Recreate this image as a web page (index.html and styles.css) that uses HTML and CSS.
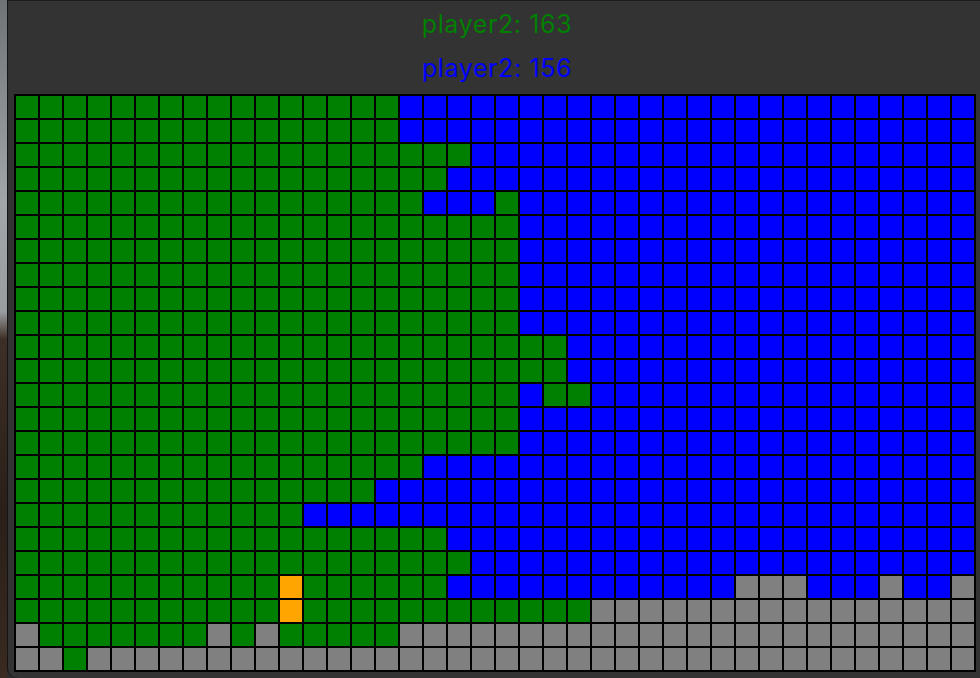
FILE: index.html
```html
<!DOCTYPE html>
<html lang="en">
<head>
<meta charset="utf-8">
<title>Territory</title>
<link rel="stylesheet" href="styles.css">
</head>
<body>
<div class="screen">
  <div class="desktop"></div>
  <div class="window">
    <header class="scores">
      <p class="score p1">player2: 163</p>
      <p class="score p2">player2: 156</p>
    </header>
    <div class="board">
<!-- row 0 -->
<i class=g></i><i class=g></i><i class=g></i><i class=g></i><i class=g></i><i class=g></i><i class=g></i><i class=g></i><i class=g></i><i class=g></i>
<i class=g></i><i class=g></i><i class=g></i><i class=g></i><i class=g></i><i class=g></i><i class=b></i><i class=b></i><i class=b></i><i class=b></i>
<i class=b></i><i class=b></i><i class=b></i><i class=b></i><i class=b></i><i class=b></i><i class=b></i><i class=b></i><i class=b></i><i class=b></i>
<i class=b></i><i class=b></i><i class=b></i><i class=b></i><i class=b></i><i class=b></i><i class=b></i><i class=b></i><i class=b></i><i class=b></i>
<!-- row 1 -->
<i class=g></i><i class=g></i><i class=g></i><i class=g></i><i class=g></i><i class=g></i><i class=g></i><i class=g></i><i class=g></i><i class=g></i>
<i class=g></i><i class=g></i><i class=g></i><i class=g></i><i class=g></i><i class=g></i><i class=b></i><i class=b></i><i class=b></i><i class=b></i>
<i class=b></i><i class=b></i><i class=b></i><i class=b></i><i class=b></i><i class=b></i><i class=b></i><i class=b></i><i class=b></i><i class=b></i>
<i class=b></i><i class=b></i><i class=b></i><i class=b></i><i class=b></i><i class=b></i><i class=b></i><i class=b></i><i class=b></i><i class=b></i>
<!-- row 2 -->
<i class=g></i><i class=g></i><i class=g></i><i class=g></i><i class=g></i><i class=g></i><i class=g></i><i class=g></i><i class=g></i><i class=g></i>
<i class=g></i><i class=g></i><i class=g></i><i class=g></i><i class=g></i><i class=g></i><i class=g></i><i class=g></i><i class=g></i><i class=b></i>
<i class=b></i><i class=b></i><i class=b></i><i class=b></i><i class=b></i><i class=b></i><i class=b></i><i class=b></i><i class=b></i><i class=b></i>
<i class=b></i><i class=b></i><i class=b></i><i class=b></i><i class=b></i><i class=b></i><i class=b></i><i class=b></i><i class=b></i><i class=b></i>
<!-- row 3 -->
<i class=g></i><i class=g></i><i class=g></i><i class=g></i><i class=g></i><i class=g></i><i class=g></i><i class=g></i><i class=g></i><i class=g></i>
<i class=g></i><i class=g></i><i class=g></i><i class=g></i><i class=g></i><i class=g></i><i class=g></i><i class=g></i><i class=b></i><i class=b></i>
<i class=b></i><i class=b></i><i class=b></i><i class=b></i><i class=b></i><i class=b></i><i class=b></i><i class=b></i><i class=b></i><i class=b></i>
<i class=b></i><i class=b></i><i class=b></i><i class=b></i><i class=b></i><i class=b></i><i class=b></i><i class=b></i><i class=b></i><i class=b></i>
<!-- row 4 -->
<i class=g></i><i class=g></i><i class=g></i><i class=g></i><i class=g></i><i class=g></i><i class=g></i><i class=g></i><i class=g></i><i class=g></i>
<i class=g></i><i class=g></i><i class=g></i><i class=g></i><i class=g></i><i class=g></i><i class=g></i><i class=b></i><i class=b></i><i class=b></i>
<i class=g></i><i class=b></i><i class=b></i><i class=b></i><i class=b></i><i class=b></i><i class=b></i><i class=b></i><i class=b></i><i class=b></i>
<i class=b></i><i class=b></i><i class=b></i><i class=b></i><i class=b></i><i class=b></i><i class=b></i><i class=b></i><i class=b></i><i class=b></i>
<!-- row 5 -->
<i class=g></i><i class=g></i><i class=g></i><i class=g></i><i class=g></i><i class=g></i><i class=g></i><i class=g></i><i class=g></i><i class=g></i>
<i class=g></i><i class=g></i><i class=g></i><i class=g></i><i class=g></i><i class=g></i><i class=g></i><i class=g></i><i class=g></i><i class=g></i>
<i class=g></i><i class=b></i><i class=b></i><i class=b></i><i class=b></i><i class=b></i><i class=b></i><i class=b></i><i class=b></i><i class=b></i>
<i class=b></i><i class=b></i><i class=b></i><i class=b></i><i class=b></i><i class=b></i><i class=b></i><i class=b></i><i class=b></i><i class=b></i>
<!-- row 6 -->
<i class=g></i><i class=g></i><i class=g></i><i class=g></i><i class=g></i><i class=g></i><i class=g></i><i class=g></i><i class=g></i><i class=g></i>
<i class=g></i><i class=g></i><i class=g></i><i class=g></i><i class=g></i><i class=g></i><i class=g></i><i class=g></i><i class=g></i><i class=g></i>
<i class=g></i><i class=b></i><i class=b></i><i class=b></i><i class=b></i><i class=b></i><i class=b></i><i class=b></i><i class=b></i><i class=b></i>
<i class=b></i><i class=b></i><i class=b></i><i class=b></i><i class=b></i><i class=b></i><i class=b></i><i class=b></i><i class=b></i><i class=b></i>
<!-- row 7 -->
<i class=g></i><i class=g></i><i class=g></i><i class=g></i><i class=g></i><i class=g></i><i class=g></i><i class=g></i><i class=g></i><i class=g></i>
<i class=g></i><i class=g></i><i class=g></i><i class=g></i><i class=g></i><i class=g></i><i class=g></i><i class=g></i><i class=g></i><i class=g></i>
<i class=g></i><i class=b></i><i class=b></i><i class=b></i><i class=b></i><i class=b></i><i class=b></i><i class=b></i><i class=b></i><i class=b></i>
<i class=b></i><i class=b></i><i class=b></i><i class=b></i><i class=b></i><i class=b></i><i class=b></i><i class=b></i><i class=b></i><i class=b></i>
<!-- row 8 -->
<i class=g></i><i class=g></i><i class=g></i><i class=g></i><i class=g></i><i class=g></i><i class=g></i><i class=g></i><i class=g></i><i class=g></i>
<i class=g></i><i class=g></i><i class=g></i><i class=g></i><i class=g></i><i class=g></i><i class=g></i><i class=g></i><i class=g></i><i class=g></i>
<i class=g></i><i class=b></i><i class=b></i><i class=b></i><i class=b></i><i class=b></i><i class=b></i><i class=b></i><i class=b></i><i class=b></i>
<i class=b></i><i class=b></i><i class=b></i><i class=b></i><i class=b></i><i class=b></i><i class=b></i><i class=b></i><i class=b></i><i class=b></i>
<!-- row 9 -->
<i class=g></i><i class=g></i><i class=g></i><i class=g></i><i class=g></i><i class=g></i><i class=g></i><i class=g></i><i class=g></i><i class=g></i>
<i class=g></i><i class=g></i><i class=g></i><i class=g></i><i class=g></i><i class=g></i><i class=g></i><i class=g></i><i class=g></i><i class=g></i>
<i class=g></i><i class=b></i><i class=b></i><i class=b></i><i class=b></i><i class=b></i><i class=b></i><i class=b></i><i class=b></i><i class=b></i>
<i class=b></i><i class=b></i><i class=b></i><i class=b></i><i class=b></i><i class=b></i><i class=b></i><i class=b></i><i class=b></i><i class=b></i>
<!-- row 10 -->
<i class=g></i><i class=g></i><i class=g></i><i class=g></i><i class=g></i><i class=g></i><i class=g></i><i class=g></i><i class=g></i><i class=g></i>
<i class=g></i><i class=g></i><i class=g></i><i class=g></i><i class=g></i><i class=g></i><i class=g></i><i class=g></i><i class=g></i><i class=g></i>
<i class=g></i><i class=g></i><i class=g></i><i class=b></i><i class=b></i><i class=b></i><i class=b></i><i class=b></i><i class=b></i><i class=b></i>
<i class=b></i><i class=b></i><i class=b></i><i class=b></i><i class=b></i><i class=b></i><i class=b></i><i class=b></i><i class=b></i><i class=b></i>
<!-- row 11 -->
<i class=g></i><i class=g></i><i class=g></i><i class=g></i><i class=g></i><i class=g></i><i class=g></i><i class=g></i><i class=g></i><i class=g></i>
<i class=g></i><i class=g></i><i class=g></i><i class=g></i><i class=g></i><i class=g></i><i class=g></i><i class=g></i><i class=g></i><i class=g></i>
<i class=g></i><i class=g></i><i class=g></i><i class=b></i><i class=b></i><i class=b></i><i class=b></i><i class=b></i><i class=b></i><i class=b></i>
<i class=b></i><i class=b></i><i class=b></i><i class=b></i><i class=b></i><i class=b></i><i class=b></i><i class=b></i><i class=b></i><i class=b></i>
<!-- row 12 -->
<i class=g></i><i class=g></i><i class=g></i><i class=g></i><i class=g></i><i class=g></i><i class=g></i><i class=g></i><i class=g></i><i class=g></i>
<i class=g></i><i class=g></i><i class=g></i><i class=g></i><i class=g></i><i class=g></i><i class=g></i><i class=g></i><i class=g></i><i class=g></i>
<i class=g></i><i class=b></i><i class=g></i><i class=g></i><i class=b></i><i class=b></i><i class=b></i><i class=b></i><i class=b></i><i class=b></i>
<i class=b></i><i class=b></i><i class=b></i><i class=b></i><i class=b></i><i class=b></i><i class=b></i><i class=b></i><i class=b></i><i class=b></i>
<!-- row 13 -->
<i class=g></i><i class=g></i><i class=g></i><i class=g></i><i class=g></i><i class=g></i><i class=g></i><i class=g></i><i class=g></i><i class=g></i>
<i class=g></i><i class=g></i><i class=g></i><i class=g></i><i class=g></i><i class=g></i><i class=g></i><i class=g></i><i class=g></i><i class=g></i>
<i class=g></i><i class=b></i><i class=b></i><i class=b></i><i class=b></i><i class=b></i><i class=b></i><i class=b></i><i class=b></i><i class=b></i>
<i class=b></i><i class=b></i><i class=b></i><i class=b></i><i class=b></i><i class=b></i><i class=b></i><i class=b></i><i class=b></i><i class=b></i>
<!-- row 14 -->
<i class=g></i><i class=g></i><i class=g></i><i class=g></i><i class=g></i><i class=g></i><i class=g></i><i class=g></i><i class=g></i><i class=g></i>
<i class=g></i><i class=g></i><i class=g></i><i class=g></i><i class=g></i><i class=g></i><i class=g></i><i class=g></i><i class=g></i><i class=g></i>
<i class=g></i><i class=b></i><i class=b></i><i class=b></i><i class=b></i><i class=b></i><i class=b></i><i class=b></i><i class=b></i><i class=b></i>
<i class=b></i><i class=b></i><i class=b></i><i class=b></i><i class=b></i><i class=b></i><i class=b></i><i class=b></i><i class=b></i><i class=b></i>
<!-- row 15 -->
<i class=g></i><i class=g></i><i class=g></i><i class=g></i><i class=g></i><i class=g></i><i class=g></i><i class=g></i><i class=g></i><i class=g></i>
<i class=g></i><i class=g></i><i class=g></i><i class=g></i><i class=g></i><i class=g></i><i class=g></i><i class=b></i><i class=b></i><i class=b></i>
<i class=b></i><i class=b></i><i class=b></i><i class=b></i><i class=b></i><i class=b></i><i class=b></i><i class=b></i><i class=b></i><i class=b></i>
<i class=b></i><i class=b></i><i class=b></i><i class=b></i><i class=b></i><i class=b></i><i class=b></i><i class=b></i><i class=b></i><i class=b></i>
<!-- row 16 -->
<i class=g></i><i class=g></i><i class=g></i><i class=g></i><i class=g></i><i class=g></i><i class=g></i><i class=g></i><i class=g></i><i class=g></i>
<i class=g></i><i class=g></i><i class=g></i><i class=g></i><i class=g></i><i class=b></i><i class=b></i><i class=b></i><i class=b></i><i class=b></i>
<i class=b></i><i class=b></i><i class=b></i><i class=b></i><i class=b></i><i class=b></i><i class=b></i><i class=b></i><i class=b></i><i class=b></i>
<i class=b></i><i class=b></i><i class=b></i><i class=b></i><i class=b></i><i class=b></i><i class=b></i><i class=b></i><i class=b></i><i class=b></i>
<!-- row 17 -->
<i class=g></i><i class=g></i><i class=g></i><i class=g></i><i class=g></i><i class=g></i><i class=g></i><i class=g></i><i class=g></i><i class=g></i>
<i class=g></i><i class=g></i><i class=b></i><i class=b></i><i class=b></i><i class=b></i><i class=b></i><i class=b></i><i class=b></i><i class=b></i>
<i class=b></i><i class=b></i><i class=b></i><i class=b></i><i class=b></i><i class=b></i><i class=b></i><i class=b></i><i class=b></i><i class=b></i>
<i class=b></i><i class=b></i><i class=b></i><i class=b></i><i class=b></i><i class=b></i><i class=b></i><i class=b></i><i class=b></i><i class=b></i>
<!-- row 18 -->
<i class=g></i><i class=g></i><i class=g></i><i class=g></i><i class=g></i><i class=g></i><i class=g></i><i class=g></i><i class=g></i><i class=g></i>
<i class=g></i><i class=g></i><i class=g></i><i class=g></i><i class=g></i><i class=g></i><i class=g></i><i class=g></i><i class=b></i><i class=b></i>
<i class=b></i><i class=b></i><i class=b></i><i class=b></i><i class=b></i><i class=b></i><i class=b></i><i class=b></i><i class=b></i><i class=b></i>
<i class=b></i><i class=b></i><i class=b></i><i class=b></i><i class=b></i><i class=b></i><i class=b></i><i class=b></i><i class=b></i><i class=b></i>
<!-- row 19 -->
<i class=g></i><i class=g></i><i class=g></i><i class=g></i><i class=g></i><i class=g></i><i class=g></i><i class=g></i><i class=g></i><i class=g></i>
<i class=g></i><i class=g></i><i class=g></i><i class=g></i><i class=g></i><i class=g></i><i class=g></i><i class=g></i><i class=g></i><i class=b></i>
<i class=b></i><i class=b></i><i class=b></i><i class=b></i><i class=b></i><i class=b></i><i class=b></i><i class=b></i><i class=b></i><i class=b></i>
<i class=b></i><i class=b></i><i class=b></i><i class=b></i><i class=b></i><i class=b></i><i class=b></i><i class=b></i><i class=b></i><i class=b></i>
<!-- row 20 -->
<i class=g></i><i class=g></i><i class=g></i><i class=g></i><i class=g></i><i class=g></i><i class=g></i><i class=g></i><i class=g></i><i class=g></i>
<i class=g></i><i class=o></i><i class=g></i><i class=g></i><i class=g></i><i class=g></i><i class=g></i><i class=g></i><i class=b></i><i class=b></i>
<i class=b></i><i class=b></i><i class=b></i><i class=b></i><i class=b></i><i class=b></i><i class=b></i><i class=b></i><i class=b></i><i class=b></i>
<i class=y></i><i class=y></i><i class=y></i><i class=b></i><i class=b></i><i class=b></i><i class=y></i><i class=b></i><i class=b></i><i class=y></i>
<!-- row 21 -->
<i class=g></i><i class=g></i><i class=g></i><i class=g></i><i class=g></i><i class=g></i><i class=g></i><i class=g></i><i class=g></i><i class=g></i>
<i class=g></i><i class=o></i><i class=g></i><i class=g></i><i class=g></i><i class=g></i><i class=g></i><i class=g></i><i class=g></i><i class=g></i>
<i class=g></i><i class=g></i><i class=g></i><i class=g></i><i class=y></i><i class=y></i><i class=y></i><i class=y></i><i class=y></i><i class=y></i>
<i class=y></i><i class=y></i><i class=y></i><i class=y></i><i class=y></i><i class=y></i><i class=y></i><i class=y></i><i class=y></i><i class=y></i>
<!-- row 22 -->
<i class=y></i><i class=g></i><i class=g></i><i class=g></i><i class=g></i><i class=g></i><i class=g></i><i class=g></i><i class=y></i><i class=g></i>
<i class=y></i><i class=g></i><i class=g></i><i class=g></i><i class=g></i><i class=g></i><i class=y></i><i class=y></i><i class=y></i><i class=y></i>
<i class=y></i><i class=y></i><i class=y></i><i class=y></i><i class=y></i><i class=y></i><i class=y></i><i class=y></i><i class=y></i><i class=y></i>
<i class=y></i><i class=y></i><i class=y></i><i class=y></i><i class=y></i><i class=y></i><i class=y></i><i class=y></i><i class=y></i><i class=y></i>
<!-- row 23 -->
<i class=y></i><i class=y></i><i class=g></i><i class=y></i><i class=y></i><i class=y></i><i class=y></i><i class=y></i><i class=y></i><i class=y></i>
<i class=y></i><i class=y></i><i class=y></i><i class=y></i><i class=y></i><i class=y></i><i class=y></i><i class=y></i><i class=y></i><i class=y></i>
<i class=y></i><i class=y></i><i class=y></i><i class=y></i><i class=y></i><i class=y></i><i class=y></i><i class=y></i><i class=y></i><i class=y></i>
<i class=y></i><i class=y></i><i class=y></i><i class=y></i><i class=y></i><i class=y></i><i class=y></i><i class=y></i><i class=y></i><i class=y></i>
    </div>
  </div>
</div>
</body>
</html>
```
FILE: styles.css
```css
html, body {
  margin: 0;
  height: 100%;
}
body {
  background: #2c2c2c;
  font-family: Inter, "Liberation Sans", Arial, sans-serif;
  overflow: hidden;
}
.screen {
  display: flex;
  height: 678px;
}
.desktop {
  width: 7px;
  flex: none;
  background: linear-gradient(to bottom, #6f7377 0%, #a3a6a9 30%, #9a9da0 46%, #3e2f26 50%, #2a1f19 75%, #3a2a20 100%);
}
.window {
  flex: 1;
  background: #333333;
  border-left: 1px solid #141414;
  border-top: 1px solid #1c1c1c;
  border-bottom-left-radius: 10px;
  padding-left: 6px;
}
.scores {
  padding-top: 1px;
  text-align: center;
}
.score {
  margin: 0;
  height: 44px;
  line-height: 44px;
  font-size: 25px;
  font-weight: 400;
  letter-spacing: 0.6px;
}
.p1 { color: #008000; }
.p2 { color: #0000ff; }
.board {
  margin-top: 4px;
  display: grid;
  grid-template-columns: repeat(40, 22px);
  grid-auto-rows: 22px;
  gap: 2px;
  padding: 2px;
  background: #000;
  width: max-content;
}
.board i { display: block; }
.g { background: #008000; }
.b { background: #0000ff; }
.y { background: #808080; }
.o { background: #ffa500; }
```
